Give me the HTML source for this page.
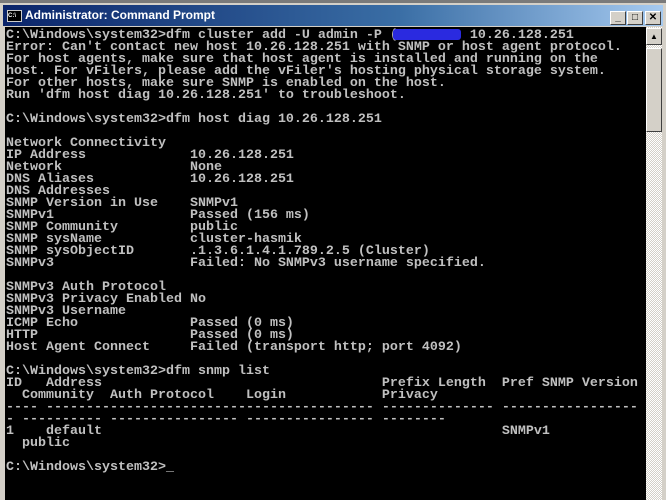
<!DOCTYPE html>
<html><head><meta charset="utf-8"><style>
html,body{margin:0;padding:0;width:666px;height:500px;overflow:hidden;background:#d4d0c8;}
#top{position:absolute;left:0;top:0;width:666px;height:3px;background:#7a7a7a;}
#title{position:absolute;left:3px;top:5px;width:660px;height:21px;background:linear-gradient(to right,#0a246a,#3a6ea5 60%,#a6caf0);}
#title span{position:absolute;left:22px;top:3px;color:#fff;font:bold 12px "Liberation Sans",sans-serif;}
#icon{position:absolute;left:4px;top:5px;width:13px;height:10px;background:#000;border:1px solid #ccc;color:#fff;font:bold 6px "Liberation Sans",sans-serif;line-height:10px;}
.btn{position:absolute;top:6px;width:14px;height:12px;background:#d4d0c8;border-top:1px solid #fff;border-left:1px solid #fff;border-right:1px solid #404040;border-bottom:1px solid #404040;font:bold 10px "Liberation Sans",sans-serif;text-align:center;line-height:12px;color:#000;}
#con{position:absolute;left:5px;top:27px;width:641px;height:473px;background:#000;}
pre{margin:0;position:absolute;left:1px;top:3px;font:13.33px/12px "Liberation Mono",monospace;color:#c0c0c0;font-weight:bold;letter-spacing:0;}
#blur{position:absolute;left:393px;top:29px;width:68px;height:11px;background:#2a2ae0;border-radius:3px;}
#sb{position:absolute;left:646px;top:27px;width:16px;height:473px;background:repeating-conic-gradient(#fff 0 25%,#d4d0c8 0 50%) 0 0/2px 2px;}
.sbtn{position:absolute;left:646px;width:14px;background:#d4d0c8;border-top:1px solid #fff;border-left:1px solid #fff;border-right:1px solid #404040;border-bottom:1px solid #404040;}
#right{position:absolute;left:662px;top:27px;width:4px;height:473px;background:#d4d0c8;}
</style></head><body>
<div id="top"></div>
<div id="title"><div id="icon">C:\</div><span>Administrator: Command Prompt</span>
<div class="btn" style="left:607px">_</div><div class="btn" style="left:624px">□</div><div class="btn" style="left:642px">✕</div></div>
<div id="con"><pre>C:\Windows\system32&gt;dfm cluster add -U admin -P (         10.26.128.251
Error: Can't contact new host 10.26.128.251 with SNMP or host agent protocol.
For host agents, make sure that host agent is installed and running on the
host. For vFilers, please add the vFiler's hosting physical storage system.
For other hosts, make sure SNMP is enabled on the host.
Run 'dfm host diag 10.26.128.251' to troubleshoot.

C:\Windows\system32&gt;dfm host diag 10.26.128.251

Network Connectivity
IP Address             10.26.128.251
Network                None
DNS Aliases            10.26.128.251
DNS Addresses
SNMP Version in Use    SNMPv1
SNMPv1                 Passed (156 ms)
SNMP Community         public
SNMP sysName           cluster-hasmik
SNMP sysObjectID       .1.3.6.1.4.1.789.2.5 (Cluster)
SNMPv3                 Failed: No SNMPv3 username specified.

SNMPv3 Auth Protocol
SNMPv3 Privacy Enabled No
SNMPv3 Username
ICMP Echo              Passed (0 ms)
HTTP                   Passed (0 ms)
Host Agent Connect     Failed (transport http; port 4092)

C:\Windows\system32&gt;dfm snmp list
ID   Address                                   Prefix Length  Pref SNMP Version
  Community  Auth Protocol    Login            Privacy
---- ----------------------------------------- -------------- -----------------
- ---------- ---------------- ---------------- --------
1    default                                                  SNMPv1
  public

C:\Windows\system32&gt;_</pre></div>
<div id="blur"></div>
<div id="sb"></div>
<div class="sbtn" style="top:28px;height:15px;font:8px sans-serif;text-align:center;line-height:15px">▲</div>
<div class="sbtn" style="top:48px;height:82px"></div>
<div id="right"></div>
</body></html>
